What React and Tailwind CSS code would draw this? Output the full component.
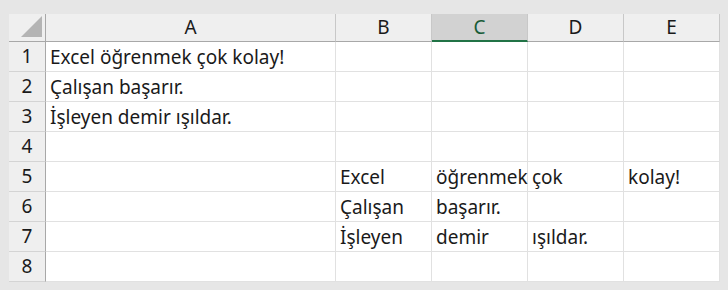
import React from 'react';

const COLS = ['A', 'B', 'C', 'D', 'E'];
const ACTIVE_COL = 'C';

// sheet contents, keyed by row number
const DATA = {
  1: ['Excel öğrenmek çok kolay!', '', '', '', ''],
  2: ['Çalışan başarır.', '', '', '', ''],
  3: ['İşleyen demir ışıldar.', '', '', '', ''],
  4: ['', '', '', '', ''],
  5: ['', 'Excel', 'öğrenmek', 'çok', 'kolay!'],
  6: ['', 'Çalışan', 'başarır.', '', ''],
  7: ['', 'İşleyen', 'demir', 'ışıldar.', ''],
  8: ['', '', '', '', ''],
};

const font = { fontFamily: '"Noto Sans", "Open Sans", sans-serif' };

const App = () => {
  return (
    <div className="w-[728px] h-[290px] bg-[#e6e6e6] pt-[14px] pl-[9px]" style={font}>
      <div className="grid grid-cols-[37px_290px_96px_96px_96px_96px] grid-rows-[28px_repeat(8,30px)] w-[711px] bg-white text-[#1a1a1a]">
        {/* corner */}
        <div className="bg-[#efefef] border-r border-b border-[#a8a8a8] flex items-end justify-end pr-[3px] pb-[4px]">
          <svg width="21" height="21" viewBox="0 0 21 21">
            <polygon points="21,0 21,21 0,21" fill="#b4b4b4" />
          </svg>
        </div>

        {COLS.map((c) => (
          <div
            key={c}
            className={`flex items-center justify-center text-[19px] border-r border-[#c8c8c8] ${
              c === ACTIVE_COL
                ? 'bg-[#d2d2d2] text-[#185c37] border-b-2 border-b-[#217346]'
                : 'bg-[#efefef] border-b border-b-[#a8a8a8]'
            }`}
          >
            {c}
          </div>
        ))}

        {Object.entries(DATA).map(([row, cells]) => (
          <React.Fragment key={row}>
            <div className="bg-[#efefef] border-r border-r-[#a8a8a8] border-b border-b-[#d4d4d4] flex items-center justify-center text-[19px]">
              {row}
            </div>
            {cells.map((v, i) => (
              <div
                key={i}
                className="border-r border-b border-[#e1e1e1] flex items-end pl-[4px] pb-[1px] text-[19px] leading-[26px] whitespace-nowrap overflow-visible"
              >
                {v}
              </div>
            ))}
          </React.Fragment>
        ))}
      </div>
    </div>
  );
};

export default App;
